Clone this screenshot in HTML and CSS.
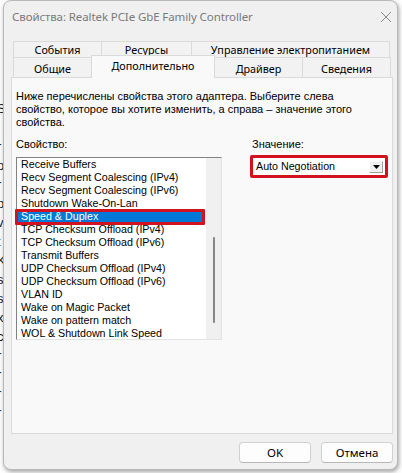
FILE: index.html
```html
<!DOCTYPE html>
<html lang="ru">
<head>
<meta charset="utf-8">
<link rel="stylesheet" href="styles.css">
</head>
<body>
<div class="bgstrip">
  <span>l</span><span>S</span><span>I</span><span>r</span><span>o</span><span>r</span><span>p</span><span>v</span><span>t</span><span>K</span><span>s</span><span>s</span><span>x</span><span>c</span><span>r</span><span>r</span><span>r</span><span>r</span>
</div>
<div class="window">
  <div class="titlebar">
    <span class="title">Свойства: Realtek PCIe GbE Family Controller</span>
    <svg class="close" width="12" height="12" viewBox="0 0 12 12"><path d="M1 1 L11 11 M11 1 L1 11" stroke="#8a8a8a" stroke-width="1" fill="none"/></svg>
  </div>
  <div class="tabs">
    <div class="tabrow back">
      <div class="tab w88">События</div>
      <div class="tab w90">Ресурсы</div>
      <div class="tab w199">Управление электропитанием</div>
    </div>
    <div class="tabrow front">
      <div class="tab w78">Общие</div>
      <div class="tab w123 active">Дополнительно</div>
      <div class="tab w88">Драйвер</div>
      <div class="tab w88">Сведения</div>
    </div>
  </div>
  <div class="panel">
    <p class="desc">Ниже перечислены свойства этого адаптера. Выберите слева<br>свойство, которое вы хотите изменить, а справа – значение этого<br>свойства.</p>
    <div class="cols">
      <div class="leftcol">
        <div class="label">Свойство:</div>
        <div class="listbox">
          <ul class="items">
            <li>Receive Buffers</li>
            <li>Recv Segment Coalescing (IPv4)</li>
            <li>Recv Segment Coalescing (IPv6)</li>
            <li>Shutdown Wake-On-Lan</li>
            <li class="sel">Speed &amp; Duplex</li>
            <li>TCP Checksum Offload (IPv4)</li>
            <li>TCP Checksum Offload (IPv6)</li>
            <li>Transmit Buffers</li>
            <li>UDP Checksum Offload (IPv4)</li>
            <li>UDP Checksum Offload (IPv6)</li>
            <li>VLAN ID</li>
            <li>Wake on Magic Packet</li>
            <li>Wake on pattern match</li>
            <li>WOL &amp; Shutdown Link Speed</li>
          </ul>
          <div class="scrollbar"><div class="thumb"></div></div>
        </div>
      </div>
      <div class="rightcol">
        <div class="label">Значение:</div>
        <div class="combo-mark">
          <div class="combo">
            <span class="combo-text">Auto Negotiation</span>
            <span class="combo-btn"><svg width="7" height="4" viewBox="0 0 7 4"><path d="M0 0 H7 L3.5 4 Z" fill="#000"/></svg></span>
          </div>
        </div>
      </div>
    </div>
  </div>
  <div class="buttons">
    <button class="btn">OK</button>
    <button class="btn">Отмена</button>
  </div>
</div>
</body>
</html>
```

FILE: styles.css
```css
html, body {
  margin: 0;
  padding: 0;
}
body {
  width: 402px;
  height: 473px;
  overflow: hidden;
  background: #fdfdfd;
  position: relative;
  font-family: "Liberation Sans", Arial, sans-serif;
}
.bgstrip {
  position: absolute;
  left: -3px;
  top: 80px;
  width: 6px;
  display: flex;
  flex-direction: column;
  font-size: 13px;
  line-height: 19px;
  color: #222;
}
.window {
  position: absolute;
  left: 3px;
  top: 0;
  width: 395px;
  height: 470px;
  box-sizing: border-box;
  background: #f0f0f0;
  border: 1px solid #b9b9b9;
  border-radius: 8px;
  box-shadow: 1px 2px 4px rgba(0,0,0,0.35);
}
.titlebar {
  height: 31px;
  display: flex;
  align-items: center;
  justify-content: space-between;
  padding: 0 5px 0 8px;
}
.title {
  font-family: "Noto Sans", "Open Sans", sans-serif;
  font-size: 11.5px;
  color: #7a7a7a;
  letter-spacing: -0.1px;
}
.close {
  display: block;
  margin-top: 1px;
}
.tabs {
  margin: 9px 0 0 8px;
  width: 381px;
  font-family: "Noto Sans", "Open Sans", sans-serif;
  font-size: 10.8px;
  color: #000;
  position: relative;
  z-index: 2;
}
.tabrow {
  display: flex;
  padding-left: 1px;
}
.tab {
  box-sizing: border-box;
  display: flex;
  align-items: center;
  justify-content: center;
  border: 1px solid #dadada;
  border-bottom: none;
  margin-right: -1px;
}
.back .tab {
  height: 16px;
  background: #f2f2f2;
}
.front .tab {
  height: 20px;
  background: #f2f2f2;
  padding-top: 1px;
}
.front .tab.active {
  height: 23px;
  margin-top: -2px;
  margin-bottom: -1px;
  background: #f9f9f9;
  position: relative;
  z-index: 3;
  padding-top: 0;
  padding-bottom: 4px;
}
.w78 { width: 79px; }
.w88 { width: 89px; }
.w90 { width: 91px; }
.w123 { width: 124px; }
.w199 { width: 199px; }
.panel {
  margin-left: 7px;
  width: 382px;
  height: 357px;
  box-sizing: border-box;
  background: #f9f9f9;
  border: 1px solid #dadada;
  padding: 12px 4px 0 4px;
  font-size: 10.7px;
  color: #000;
}
.desc {
  margin: 0;
  line-height: 13px;
  font-size: 11px;
  white-space: nowrap;
}
.cols {
  display: flex;
  margin-top: 9px;
}
.label {
  line-height: 13px;
  height: 13px;
  font-size: 11px;
}
.leftcol {
  width: 206px;
}
.listbox {
  margin-top: 6px;
  box-sizing: border-box;
  width: 206px;
  height: 183px;
  background: #fff;
  border: 1px solid #828282;
  border-right-color: #e3e3e3;
  border-bottom-color: #e3e3e3;
  display: flex;
}
.items {
  list-style: none;
  margin: 0;
  padding: 0;
  flex: 1;
}
.items li {
  height: 13px;
  line-height: 13px;
  padding-left: 4px;
  white-space: nowrap;
}
.items li.sel {
  background: #0078d7;
  color: #fff;
  position: relative;
  margin-right: 1px;
}
.items li.sel::after {
  content: "";
  position: absolute;
  left: -2px;
  top: -1px;
  right: 0;
  bottom: -2px;
  border: 3px solid #d3121f;
  border-radius: 1px;
}
.scrollbar {
  width: 15px;
  background: #f0f0f0;
  display: flex;
  justify-content: center;
  padding-top: 79px;
  box-sizing: border-box;
}
.thumb {
  width: 2px;
  height: 86px;
  background: #868686;
  border-radius: 1px;
}
.rightcol {
  margin-left: 28px;
}
.rightcol .label {
  margin-left: 2px;
}
.combo-mark {
  margin-top: 4px;
  width: 138px;
  height: 23px;
  box-sizing: border-box;
  border: 3px solid #d3121f;
  border-radius: 2px;
}
.combo {
  height: 17px;
  background: #fff;
  display: flex;
  align-items: center;
  justify-content: space-between;
  padding-left: 3px;
}
.combo-text {
  line-height: 13px;
}
.combo-btn {
  width: 12px;
  height: 10px;
  margin-right: 2px;
  background: #f0f0f0;
  border: 1px solid #fff;
  border-right-color: #a0a0a0;
  border-bottom-color: #a0a0a0;
  display: flex;
  align-items: center;
  justify-content: center;
}
.combo-btn svg {
  display: block;
}
.buttons {
  display: flex;
  justify-content: flex-end;
  gap: 10px;
  margin-top: 8px;
  padding-right: 4px;
}
.btn {
  width: 72px;
  height: 21px;
  box-sizing: border-box;
  background: #fdfdfd;
  border: 1px solid #d0d0d0;
  border-bottom-color: #b8b8b8;
  border-radius: 4px;
  font-family: "Noto Sans", "Open Sans", sans-serif;
  font-size: 11.5px;
  color: #000;
  padding: 0;
}
```
